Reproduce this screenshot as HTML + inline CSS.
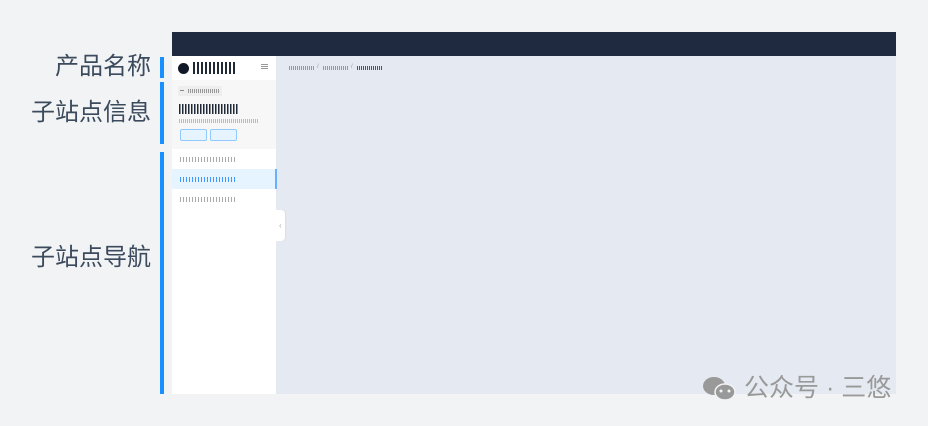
<!DOCTYPE html>
<html><head><meta charset="utf-8"><style>
*{margin:0;padding:0;box-sizing:border-box}
body{width:928px;height:426px;background:#f2f3f5;position:relative;overflow:hidden;font-family:"Liberation Sans","Noto Sans CJK SC",sans-serif}
.a{position:absolute}
.lbl{position:absolute;right:777px;font-size:24px;color:#3b4a5c;line-height:1;white-space:nowrap}
.bar{position:absolute;left:160px;width:4px;background:#1890ff}
.t{position:absolute;height:6px;background:repeating-linear-gradient(90deg,#aaa 0 1px,transparent 1px 3px)}
</style></head><body>
<div class="lbl" style="top:55px">产品名称</div>
<div class="lbl" style="top:101px">子站点信息</div>
<div class="lbl" style="top:246px">子站点导航</div>
<div class="bar" style="top:57px;height:21px"></div>
<div class="bar" style="top:82px;height:62px"></div>
<div class="bar" style="top:152px;height:242px"></div>

<div class="a" style="left:172px;top:32px;width:724px;height:24px;background:#1f2a40"></div>
<div class="a" style="left:276px;top:56px;width:620px;height:338px;background:#e5eaf2"></div>
<div class="a" style="left:172px;top:56px;width:104px;height:338px;background:#fff"></div>
<div class="a" style="left:178px;top:63px;width:11px;height:11px;border-radius:50%;background:#111827"></div>
<div class="t" style="left:193px;top:62px;width:43px;height:12px;background:repeating-linear-gradient(90deg,#1f2937 0 2px,transparent 2px 4px)"></div>
<div class="a" style="left:261px;top:64px;width:7px;height:1px;background:#999;box-shadow:0 2px #999,0 4px #999"></div>
<div class="a" style="left:172px;top:80px;width:104px;height:69px;background:#f7f7f7"></div>
<div class="a" style="left:178px;top:86px;width:44px;height:10px;background:#eee"></div>
<div class="a" style="left:180px;top:90px;width:4px;height:1px;background:#888"></div>
<div class="t" style="left:188px;top:89px;width:32px;height:4px;background:repeating-linear-gradient(90deg,#999 0 1px,transparent 1px 2px)"></div>
<div class="t" style="left:179px;top:104px;width:60px;height:10px;background:repeating-linear-gradient(90deg,#1f2937 0 1.5px,transparent 1.5px 3px)"></div>
<div class="t" style="left:179px;top:119px;width:80px;height:4px;background:repeating-linear-gradient(90deg,#bbb 0 1px,transparent 1px 2px)"></div>
<div class="a" style="left:180px;top:129px;width:27px;height:12px;background:#e6f4ff;border:1px solid #91caff;border-radius:2px"></div>
<div class="a" style="left:210px;top:129px;width:27px;height:12px;background:#e6f4ff;border:1px solid #91caff;border-radius:2px"></div>
<div class="t" style="left:180px;top:157px;width:57px;height:5px"></div>
<div class="a" style="left:172px;top:169px;width:105px;height:20px;background:#e6f4ff;border-right:2px solid #69b1ff"></div>
<div class="t" style="left:180px;top:177px;width:57px;height:5px;background:repeating-linear-gradient(90deg,#4096ff 0 1px,transparent 1px 3px)"></div>
<div class="t" style="left:180px;top:197px;width:57px;height:5px"></div>
<div class="a" style="left:276px;top:210px;width:9px;height:31px;background:#fff;border-radius:0 4px 4px 0;box-shadow:1px 0 1px #ddd"></div>
<div class="a" style="left:279px;top:222px;font-size:8px;color:#aaa;line-height:1">‹</div>
<div class="t" style="left:289px;top:66px;width:25px;height:4px;background:repeating-linear-gradient(90deg,#999 0 1px,transparent 1px 2px)"></div>
<div class="a" style="left:317px;top:64px;font-size:6px;color:#999;line-height:1">/</div>
<div class="t" style="left:323px;top:66px;width:25px;height:4px;background:repeating-linear-gradient(90deg,#999 0 1px,transparent 1px 2px)"></div>
<div class="a" style="left:351px;top:64px;font-size:6px;color:#999;line-height:1">/</div>
<div class="t" style="left:357px;top:66px;width:25px;height:4px;background:repeating-linear-gradient(90deg,#555 0 1px,transparent 1px 2px)"></div>
<svg class="a" style="left:702px;top:376px" width="36" height="26" viewBox="0 0 36 26"><ellipse cx="12" cy="10" rx="11" ry="9" fill="#999"/><ellipse cx="23" cy="16" rx="10" ry="8" fill="#999" stroke="#f2f3f5" stroke-width="1.5"/><circle cx="19" cy="15" r="1.5" fill="#f2f3f5"/><circle cx="27" cy="15" r="1.5" fill="#f2f3f5"/></svg>
<div class="a" style="left:744px;top:376px;font-size:25px;color:#999;line-height:1;white-space:nowrap">公众号 · 三悠</div>
</body></html>
